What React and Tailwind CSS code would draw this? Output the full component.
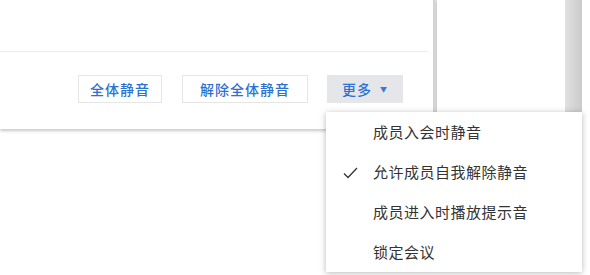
import React from 'react';

const font = { fontFamily: '"Noto Sans CJK SC", "Noto Sans", sans-serif' };

const menuItems = [
    { label: '成员入会时静音', checked: false },
    { label: '允许成员自我解除静音', checked: true },
    { label: '成员进入时播放提示音', checked: false },
    { label: '锁定会议', checked: false },
];

const Check = () => (
    <svg width="15" height="12" viewBox="0 0 15 12" fill="none">
        <path d="M1 6.5 L5 10.5 L14 1" stroke="#333" strokeWidth="1.3" />
    </svg>
);

const App = () => {
    return (
        <div className="relative w-[590px] h-[275px] bg-white overflow-hidden" style={font}>
            {/* top panels */}
            <div className="flex h-[131px]">
                <div className="w-[433px] h-[129px] bg-white flex flex-col shadow-[0_2px_3px_rgba(0,0,0,0.22)]">
                    <div className="h-[52px] mr-[5px] border-b border-[#ededed]" />
                    <div className="flex justify-end items-center pr-[30px] pt-[23px]">
                        <button className="h-[28px] w-[84px] border border-[#e6e6e6] bg-white text-[14px] font-medium tracking-[1px] text-[#2c70d0] leading-none">
                            全体静音
                        </button>
                        <button className="h-[28px] ml-[20px] w-[126px] border border-[#e6e6e6] bg-white text-[14px] font-medium tracking-[1px] text-[#2c70d0] leading-none">
                            解除全体静音
                        </button>
                        <button className="h-[28px] ml-[19px] w-[76px] pl-[15px] bg-[#e4e6ea] text-[14px] font-medium tracking-[1px] text-[#2c70d0] leading-none flex items-center gap-[8px]">
                            <span>更多</span>
                            <span className="text-[7px] text-[#3a78d6]">▼</span>
                        </button>
                    </div>
                </div>
                <div className="w-[4px] h-[129px] bg-gradient-to-r from-[#cfcfcf] to-[#e6e6e6]" />
                <div className="w-[128px] h-[129px] bg-white shadow-[0_2px_3px_rgba(0,0,0,0.22)]" />
                <div className="w-[17px] h-[129px] bg-gradient-to-r from-[#e0e0e0] to-[#cbcbcb]" />
            </div>

            {/* dropdown menu */}
            <div className="absolute left-[326px] top-[112px] w-[256px] h-[160px] bg-white shadow-[0_1px_6px_rgba(0,0,0,0.28)]">
                {menuItems.map((item) => (
                    <div key={item.label} className="relative h-[40px] flex items-center pl-[47px] text-[15px] tracking-[0.5px] text-[#333]">
                        {item.checked && (
                            <span className="absolute left-[17px] top-[15px]">
                                <Check />
                            </span>
                        )}
                        {item.label}
                    </div>
                ))}
            </div>
        </div>
    );
};

export default App;
